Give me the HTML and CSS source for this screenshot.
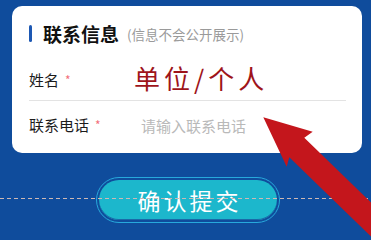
FILE: index.html
```html
<!DOCTYPE html>
<html lang="zh-CN">
<head>
<meta charset="utf-8">
<title>联系信息</title>
<link rel="stylesheet" href="styles.css">
</head>
<body>
<div class="page">
  <div class="card">
    <div class="title-row">
      <span class="bar"></span>
      <span class="title">联系信息</span>
      <span class="sub">(信息不会公开展示)</span>
    </div>
    <div class="row row-first">
      <div class="label">姓名<span class="req">*</span></div>
      <div class="value-big">单位/个人</div>
    </div>
    <div class="row row-second">
      <div class="label">联系电话<span class="req">*</span></div>
      <div class="placeholder">请输入联系电话</div>
    </div>
  </div>
  <div class="btn-wrap">
    <div class="btn-ring">
      <div class="btn">确认提交</div>
    </div>
  </div>
</div>
<svg class="arrow" width="371" height="237" viewBox="0 0 371 237" aria-hidden="true">
  <polygon points="263.3,117.3 312.7,131.7 304.3,137.7 420,250 420,284 289.3,157.3 286.7,166.7" fill="#c4161c"/>
</svg>
</body>
</html>
```
FILE: styles.css
```css
html, body {
  margin: 0;
  padding: 0;
}
body {
  width: 371px;
  height: 237px;
  overflow: hidden;
  background: #0f4c9c;
  position: relative;
  font-family: "Noto Sans CJK SC", "Noto Sans", sans-serif;
}
.page {
  padding: 6px 9px 0 12px;
}
.card {
  background: #ffffff;
  border-radius: 10px;
  padding: 16px 16px 5px 17px;
}
.title-row {
  display: flex;
  align-items: center;
  height: 23px;
}
.bar {
  width: 3px;
  height: 17px;
  border-radius: 1.5px;
  background: #1d58b3;
}
.title {
  margin-left: 11px;
  font-size: 19px;
  line-height: 23px;
  font-weight: bold;
  color: #111111;
}
.sub {
  margin-left: 8px;
  font-size: 13.5px;
  line-height: 23px;
  color: #9a9a9a;
  padding-top: 1px;
}
.row {
  display: flex;
  align-items: center;
}
.row-first {
  margin-top: 11px;
  height: 44px;
  border-bottom: 1px solid #e3e3e3;
}
.row-second {
  height: 47px;
}
.label {
  width: 105px;
  flex: none;
  font-size: 15px;
  line-height: 20px;
  color: #1c1c1c;
  display: flex;
  align-items: center;
}
.row-first .label {
  padding-top: 3px;
}
.req {
  margin-left: 6px;
  font-size: 12px;
  color: #f36f7c;
}
.value-big {
  font-size: 26px;
  line-height: 32px;
  letter-spacing: 4px;
  color: #9e141a;
}
.placeholder {
  padding-left: 7px;
  padding-top: 3px;
  font-size: 15px;
  line-height: 20px;
  color: #b9b9b9;
}
.btn-wrap {
  position: relative;
  margin-top: 24px;
  margin-left: -12px;
  margin-right: -9px;
  padding-left: 5px;
  display: flex;
  justify-content: center;
}
.btn-wrap::after {
  content: "";
  position: absolute;
  left: 0;
  right: 0;
  top: 21px;
  height: 1px;
  background: repeating-linear-gradient(to right, #cdb8b4 0 4px, transparent 4px 7px);
}
.btn-ring {
  border: 1.5px solid #27a9dc;
  border-radius: 26px;
  padding: 2px;
}
.btn {
  width: 178px;
  height: 40px;
  border-radius: 20px;
  background: #1cb7cc;
  box-shadow: inset 0 -1px 0 #1a6aa8;
  color: #ffffff;
  font-size: 23px;
  line-height: 40px;
  letter-spacing: 3px;
  text-indent: 3px;
  text-align: center;
}
.arrow {
  position: absolute;
  left: 0;
  top: 0;
  pointer-events: none;
}
```
